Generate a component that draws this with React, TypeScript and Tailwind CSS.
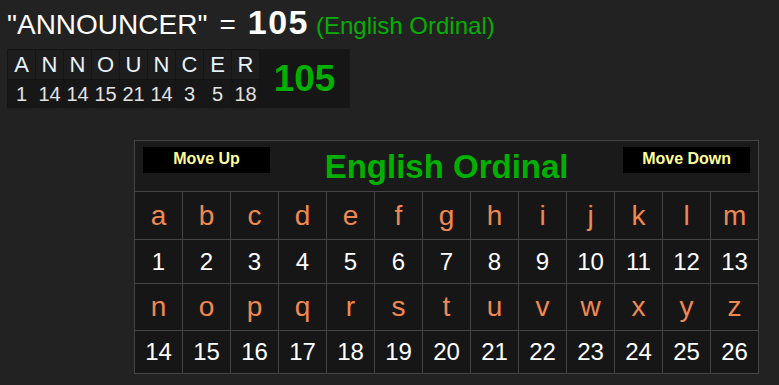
import React from "react";

const WORD = "ANNOUNCER";
const ALPHABET = "abcdefghijklmnopqrstuvwxyz".split("");

// English Ordinal: a=1 ... z=26
const ordinal = (ch: string) => ch.toLowerCase().charCodeAt(0) - 96;

function WordBreakdown({ word }: { word: string }) {
  const chars = word.split("");
  const total = chars.reduce((sum, c) => sum + ordinal(c), 0);

  return (
    <table className="ml-[7px] border-collapse border border-[#171717]">
      <tbody>
        <tr className="h-[30px] bg-[#1d1d1d]">
          {chars.map((c, i) => (
            <td
              key={i}
              className="w-[28px] border border-[#151515] p-0 text-center text-[22px] leading-none text-[#e6f2ff]"
            >
              {c}
            </td>
          ))}
          <td
            rowSpan={2}
            className="w-[90px] bg-[#161616] p-0 text-center text-[37px] font-bold leading-none text-[#00b000]"
          >
            {total}
          </td>
        </tr>
        <tr className="h-[28px] bg-[#171717]">
          {chars.map((c, i) => (
            <td
              key={i}
              className="border border-[#151515] p-0 text-center text-[20px] leading-none text-[#e2e2e2]"
            >
              {ordinal(c)}
            </td>
          ))}
        </tr>
      </tbody>
    </table>
  );
}

function CipherChart() {
  const first = ALPHABET.slice(0, 13);
  const second = ALPHABET.slice(13);

  const letterRow = (row: string[], h: string) => (
    <tr className={h}>
      {row.map((l) => (
        <td
          key={l}
          className="border border-[#444] p-0 text-center text-[28px] leading-none text-[#f0894f]"
        >
          {l}
        </td>
      ))}
    </tr>
  );

  const numberRow = (row: string[], h: string) => (
    <tr className={h}>
      {row.map((l) => (
        <td
          key={l}
          className="border border-[#444] p-0 text-center text-[24px] leading-none text-white"
        >
          {ordinal(l)}
        </td>
      ))}
    </tr>
  );

  return (
    <table className="ml-[134px] mt-[32px] w-[625px] table-fixed border-collapse border border-[#4a4a4a] bg-[#161616]">
      <colgroup>
        {first.map((l) => (
          <col key={l} className="w-[48px]" />
        ))}
      </colgroup>
      <tbody>
        <tr className="h-[50px] bg-[#1a1a1a]">
          <td colSpan={13} className="border border-[#444] p-0">
            <div className="flex h-[50px] items-start justify-between px-[8px]">
              <button className="mt-[6px] h-[26px] w-[127px] bg-black pb-[3px] text-[16px] font-bold leading-none text-[#ffff99]">
                Move Up
              </button>
              <div className="self-center text-[33px] font-bold leading-none text-[#00b000]">
                English Ordinal
              </div>
              <button className="mt-[6px] h-[26px] w-[127px] bg-black pb-[3px] text-[16px] font-bold leading-none text-[#ffff99]">
                Move Down
              </button>
            </div>
          </td>
        </tr>
        {letterRow(first, "h-[48px]")}
        {numberRow(first, "h-[44px]")}
        {letterRow(second, "h-[47px]")}
        {numberRow(second, "h-[43px]")}
      </tbody>
    </table>
  );
}

export default function App() {
  return (
    <div
      className="h-[385px] w-full overflow-hidden bg-[#222222]"
      style={{ fontFamily: '"Liberation Sans", Arial, sans-serif' }}
    >
      <div className="flex h-[49px] items-baseline pl-[7px] pt-[5px] leading-none">
        <span className="text-[28px] text-white">"{WORD}"</span>
        <span className="ml-[12px] text-[28px] text-white">=</span>
        <span className="ml-[12px] text-[34px] font-bold tracking-[1.5px] text-white">105</span>
        <span className="ml-[7px] text-[24px] text-[#00b000]">(English Ordinal)</span>
      </div>
      <WordBreakdown word={WORD} />
      <CipherChart />
    </div>
  );
}
